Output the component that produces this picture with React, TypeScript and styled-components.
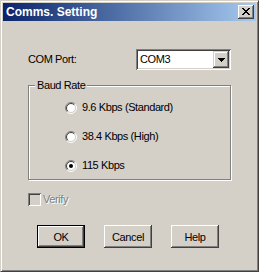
import React from "react";
import styled, { createGlobalStyle } from "styled-components";

const Global = createGlobalStyle`
  html, body { margin: 0; padding: 0; background: #d4d0c8; }
  * { box-sizing: border-box; }
`;

const FACE = "#d4d0c8";
const SHADOW = "#808080";
const DARK = "#404040";

const Window = styled.div`
  width: 259px;
  height: 272px;
  background: ${FACE};
  border: 1px solid;
  border-color: ${FACE} ${DARK} ${DARK} ${FACE};
  box-shadow: inset 1px 1px #fff, inset -1px -1px ${SHADOW};
  padding: 2px;
  display: flex;
  flex-direction: column;
  font-family: "Liberation Sans", Arial, sans-serif;
  font-size: 11px;
  letter-spacing: -0.4px;
  color: #000;
`;

const TitleBar = styled.div`
  height: 18px;
  display: flex;
  align-items: center;
  justify-content: space-between;
  padding: 0 2px 0 3px;
  background: linear-gradient(to right, #0a246a, #a6caf0);
`;

const Title = styled.span`
  color: #fff;
  font-weight: bold;
  font-size: 12px;
  letter-spacing: 0;
`;

const CaptionButton = styled.div`
  width: 16px;
  height: 14px;
  background: ${FACE};
  box-shadow: inset -1px -1px ${DARK}, inset 1px 1px #fff, inset -2px -2px ${SHADOW};
  display: flex;
  align-items: center;
  justify-content: center;
  padding-bottom: 1px;
`;

const Body = styled.div`
  display: flex;
  flex-direction: column;
  padding: 28px 25px 0;
`;

const ComRow = styled.div`
  display: flex;
  align-items: center;
  justify-content: space-between;
  height: 21px;
`;

const Label = styled.span<{ $disabled?: boolean }>`
  line-height: 13px;
  white-space: nowrap;
  color: ${(p) => (p.$disabled ? SHADOW : "#000")};
  text-shadow: ${(p) => (p.$disabled ? "1px 1px #fff" : "none")};
`;

const Combo = styled.div`
  width: 95px;
  height: 21px;
  padding: 2px;
  background: #fff;
  box-shadow: inset 1px 1px ${SHADOW}, inset -1px -1px #fff, inset 2px 2px ${DARK}, inset -2px -2px ${FACE};
  display: flex;
  align-items: center;
`;

const ComboText = styled.span`
  flex: 1;
  padding-left: 2px;
  line-height: 13px;
`;

const DropButton = styled.div`
  width: 16px;
  height: 17px;
  background: ${FACE};
  box-shadow: inset -1px -1px ${DARK}, inset 1px 1px ${FACE}, inset -2px -2px ${SHADOW}, inset 2px 2px #fff;
  display: flex;
  align-items: center;
  justify-content: center;
`;

const Group = styled.fieldset`
  margin: 9px 0 0;
  padding: 9px 0 7px 0;
  width: 100%;
  min-width: 0;
  border: 1px solid ${SHADOW};
  box-shadow: inset 1px 1px #fff, 1px 1px #fff;
`;

const Legend = styled.legend`
  margin-left: 6px;
  padding: 0 2px;
  line-height: 13px;
  background: ${FACE};
`;

const OptionList = styled.div`
  display: flex;
  flex-direction: column;
  gap: 16px;
  padding-left: 36px;
`;

const OptionRow = styled.label`
  display: flex;
  align-items: center;
  gap: 5px;
  height: 13px;
`;

const VerifyRow = styled.div`
  display: flex;
  align-items: center;
  gap: 2px;
  margin-top: 13px;
  height: 13px;
`;

const CheckBox = styled.div`
  width: 13px;
  height: 13px;
  background: ${FACE};
  box-shadow: inset 1px 1px ${SHADOW}, inset -1px -1px #fff, inset 2px 2px ${DARK}, inset -2px -2px ${FACE};
`;

const ButtonRow = styled.div`
  display: flex;
  gap: 19px;
  margin-top: 19px;
  padding-left: 9px;
`;

const PushButton = styled.div<{ $default?: boolean }>`
  width: 48px;
  height: 23px;
  background: ${FACE};
  border: ${(p) => (p.$default ? "1px solid #000" : "none")};
  box-shadow: inset -1px -1px ${DARK}, inset 1px 1px #fff, inset -2px -2px ${SHADOW};
  display: flex;
  align-items: center;
  justify-content: center;
  line-height: 13px;
  padding-top: 1px;
`;

const CloseIcon = () => (
  <svg width="8" height="7" viewBox="0 0 8 7" shapeRendering="crispEdges">
    <path d="M0 0h2v1h-2zM6 0h2v1h-2zM1 1h2v1h-2zM5 1h2v1h-2zM2 2h4v1h-4zM3 3h2v1h-2zM2 4h4v1h-4zM1 5h2v1h-2zM5 5h2v1h-2zM0 6h2v1h-2zM6 6h2v1h-2z" fill="#000" />
  </svg>
);

const Arrow = () => (
  <svg width="7" height="4" viewBox="0 0 7 4" shapeRendering="crispEdges">
    <path d="M0 0h7v1h-7zM1 1h5v1h-5zM2 2h3v1h-3zM3 3h1v1h-1z" fill="#000" />
  </svg>
);

const Radio = ({ checked }: { checked?: boolean }) => {
  const half = (r: number, first: boolean) => {
    const d = r * Math.SQRT1_2;
    const bl = `${6 - d} ${6 + d}`;
    const tr = `${6 + d} ${6 - d}`;
    return first ? `M${bl} A${r} ${r} 0 0 1 ${tr}` : `M${tr} A${r} ${r} 0 0 1 ${bl}`;
  };
  return (
    <svg width="12" height="12" viewBox="0 0 12 12">
      <circle cx="6" cy="6" r="4.5" fill="#fff" />
      <path d={half(5.5, true)} stroke={SHADOW} fill="none" />
      <path d={half(5.5, false)} stroke="#fff" fill="none" />
      <path d={half(4.5, true)} stroke={DARK} fill="none" />
      <path d={half(4.5, false)} stroke={FACE} fill="none" />
      {checked && <circle cx="6" cy="6" r="2" fill="#000" />}
    </svg>
  );
};

const options = [
  { label: "9.6 Kbps (Standard)", checked: false },
  { label: "38.4 Kbps (High)", checked: false },
  { label: "115 Kbps", checked: true },
];

export default function App() {
  return (
    <>
      <Global />
      <Window>
        <TitleBar>
          <Title>Comms. Setting</Title>
          <CaptionButton>
            <CloseIcon />
          </CaptionButton>
        </TitleBar>
        <Body>
          <ComRow>
            <Label>COM Port:</Label>
            <Combo>
              <ComboText>COM3</ComboText>
              <DropButton>
                <Arrow />
              </DropButton>
            </Combo>
          </ComRow>
          <Group>
            <Legend>Baud Rate</Legend>
            <OptionList>
              {options.map((o) => (
                <OptionRow key={o.label}>
                  <Radio checked={o.checked} />
                  <Label>{o.label}</Label>
                </OptionRow>
              ))}
            </OptionList>
          </Group>
          <VerifyRow>
            <CheckBox />
            <Label $disabled>Verify</Label>
          </VerifyRow>
          <ButtonRow>
            <PushButton $default>OK</PushButton>
            <PushButton>Cancel</PushButton>
            <PushButton>Help</PushButton>
          </ButtonRow>
        </Body>
      </Window>
    </>
  );
}
